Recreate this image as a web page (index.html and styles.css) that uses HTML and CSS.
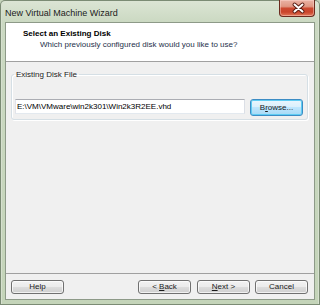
FILE: index.html
```html
<!DOCTYPE html>
<html>
<head>
<meta charset="utf-8">
<title>New Virtual Machine Wizard</title>
<link rel="stylesheet" href="styles.css">
</head>
<body>
<div class="window">
  <div class="titlebar">
    <span class="title">New Virtual Machine Wizard</span>
    <div class="close">
      <svg width="36" height="16" viewBox="0 0 36 16">
        <path d="M14.5 4.5 L22.5 11.5 M22.5 4.5 L14.5 11.5" stroke="#5a1c12" stroke-width="4" stroke-linecap="round" fill="none"/>
        <path d="M14.5 4.5 L22.5 11.5 M22.5 4.5 L14.5 11.5" stroke="#ffffff" stroke-width="2" stroke-linecap="round" fill="none"/>
      </svg>
    </div>
  </div>
  <div class="client">
    <div class="header">
      <div class="h-title">Select an Existing Disk</div>
      <div class="h-sub">Which previously configured disk would you like to use?</div>
    </div>
    <div class="content">
      <fieldset class="group">
        <legend>Existing Disk File</legend>
        <div class="row">
          <div class="textbox">E:\VM\VMware\win2k301\Win2k3R2EE.vhd</div>
          <div class="btn btn-focus">B<u>r</u>owse...</div>
        </div>
      </fieldset>
    </div>
    <div class="footer">
      <div class="btn">Help</div>
      <div class="spacer"></div>
      <div class="btn">&lt; <u>B</u>ack</div>
      <div class="btn btn-next"><u>N</u>ext &gt;</div>
      <div class="btn btn-cancel">Cancel</div>
    </div>
  </div>
</div>
</body>
</html>
```
FILE: styles.css
```css
* { box-sizing: border-box; }
html, body { margin: 0; padding: 0; }
body {
  width: 320px;
  height: 305px;
  overflow: hidden;
  font-family: "Liberation Sans", Arial, sans-serif;
  font-size: 8px;
  color: #000;
  background: #c5d4ba;
}
.window {
  width: 320px;
  height: 305px;
  display: flex;
  flex-direction: column;
  padding: 0 5px 5px 5px;
  background: linear-gradient(180deg, #dce5d5 0px, #cbd9c2 22px, #c4d4b9 100%);
  box-shadow: inset 0 0 0 1px #7b8b74, inset 2px 0 0 #d6e0cf, inset -2px 0 0 #d6e0cf;
  border-radius: 5px 5px 0 0;
}
.titlebar {
  height: 22px;
  flex: none;
  display: flex;
  align-items: flex-start;
}
.title {
  padding-top: 7px;
  font-size: 9px;
  line-height: 12px;
  color: #1b1b1b;
}
.close {
  margin-left: auto;
  width: 36px;
  height: 17px;
  border: 1px solid #6b2a1e;
  border-top: none;
  border-radius: 0 0 4px 4px;
  background: linear-gradient(180deg, #eab3a5 0%, #e09783 40%, #cc4a31 52%, #c9442b 75%, #e2795a 100%);
  box-shadow: inset 0 0 0 1px rgba(255, 220, 210, 0.45);
}
.close svg { display: block; }
.client {
  flex: 1;
  display: flex;
  flex-direction: column;
  border: 1px solid #8d9a88;
  background: #f0f0f0;
}
.header {
  flex: none;
  height: 39px;
  background: #fff;
  border-bottom: 1px solid #a0a0a0;
  padding: 5px 0 0 17px;
}
.h-title {
  font-weight: bold;
  line-height: 11px;
}
.h-sub {
  line-height: 11px;
  padding-left: 17px;
  color: #1e2f4a;
}
.content {
  flex: 1;
  padding: 7px 6px 0 5px;
}
.group {
  margin: 0;
  min-width: 0;
  padding: 19px 4px 3px 3px;
  border: 1px solid #d5dfe5;
  border-radius: 3px;
  box-shadow: inset 1px 1px 0 #fff, 1px 1px 0 #fff;
}
.group legend {
  padding: 0 2px;
  margin-left: -1px;
  line-height: 11px;
  color: #222;
}
.row {
  display: flex;
  align-items: flex-start;
  gap: 5px;
}
.textbox {
  width: 230px;
  height: 15px;
  border: 1px solid;
  border-color: #abadb3 #dbdfe6 #e3e9ef #e2e3ea;
  background: #fff;
  line-height: 13px;
  padding-left: 1px;
  white-space: nowrap;
  overflow: hidden;
}
.btn {
  flex: none;
  width: 53px;
  height: 14px;
  border: 1px solid #707070;
  border-radius: 3px;
  background: linear-gradient(180deg, #f2f2f2 0%, #ebebeb 50%, #dddddd 50%, #cfcfcf 100%);
  box-shadow: inset 0 0 0 1px rgba(255, 255, 255, 0.7);
  text-align: center;
  line-height: 12px;
  color: #1a1a1a;
  white-space: nowrap;
}
.btn-focus {
  height: 17px;
  line-height: 15px;
  border-color: #3c8cc4;
  background: linear-gradient(180deg, #eaf6fd 0%, #d9f0fc 50%, #bee6fd 50%, #a7d9f5 100%);
  box-shadow: inset 0 0 0 1px #5fcdf3;
}
.spacer { flex: 1; }
.btn-next { margin-left: 6px; }
.btn-cancel { margin-left: 5px; }
.footer {
  flex: none;
  display: flex;
  border-top: 1px solid #a0a0a0;
  padding: 6px 6px 5px 5px;
}
u { text-decoration: underline; }
```
